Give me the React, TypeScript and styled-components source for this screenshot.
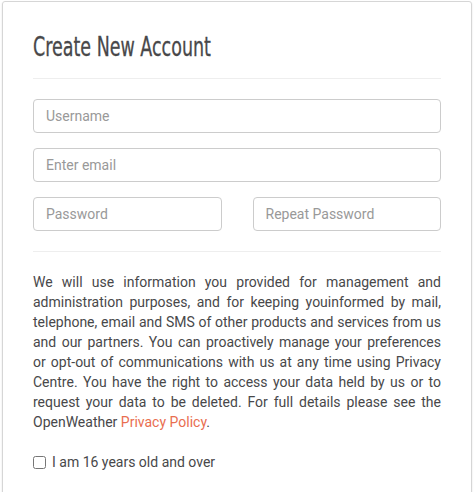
import styled, { createGlobalStyle } from 'styled-components'

const GlobalStyle = createGlobalStyle`
  html, body {
    margin: 0;
    padding: 0;
    background: #fff;
  }
  body {
    font-family: Roboto, "Noto Sans", Arial, sans-serif;
    color: #48484a;
  }
  * {
    box-sizing: border-box;
  }
`

function App() {
  return (
    <>
      <GlobalStyle />
      <_Page>
        <_Card>
          <_Title>Create New Account</_Title>
          <_Divider top={13} />
          <_Form>
            <_Input type="text" placeholder="Username" />
            <_Input type="email" placeholder="Enter email" />
            <_Row>
              <_Input type="password" placeholder="Password" />
              <_Input type="password" placeholder="Repeat Password" />
            </_Row>
          </_Form>
          <_Divider top={20} />
          <_Notice>
            We will use information you provided for management and
            administration purposes, and for keeping youinformed by mail,
            telephone, email and SMS of other products and services from us and
            our partners. You can proactively manage your preferences or opt-out
            of communications with us at any time using Privacy Centre. You have
            the right to access your data held by us or to request your data to
            be deleted. For full details please see the OpenWeather{' '}
            <_Link href="#">Privacy Policy</_Link>.
          </_Notice>
          <_CheckLabel>
            <_Checkbox type="checkbox" />
            I am 16 years old and over
          </_CheckLabel>
        </_Card>
      </_Page>
    </>
  )
}

const _Page = styled.div`
  padding: 1px 3px 0 2px;
  height: 492px;
  overflow: hidden;
`

const _Card = styled.div`
  width: 470px;
  min-height: 520px;
  border: 1px solid #d6d6d6;
  border-radius: 3px;
  box-shadow: 0 1px 2px rgba(0, 0, 0, 0.12);
  padding: 27px 30px 30px 30px;
`

// Oswald isn't available, so a condensed face squeezed a little more
const _Title = styled.h1`
  margin: 0;
  font-family: "DejaVu Sans Condensed", "DejaVu Sans", sans-serif;
  font-stretch: condensed;
  font-weight: 400;
  font-size: 27px;
  line-height: 36px;
  color: #48484a;
  -webkit-text-stroke: 0.3px #48484a;
  transform: scaleX(0.72);
  transform-origin: left center;
  white-space: nowrap;
`

const _Divider = styled.hr<{ top: number }>`
  margin: ${({ top }) => top}px 0 20px;
  border: 0;
  border-top: 1px solid #eeeeee;
`

const _Form = styled.div`
  display: flex;
  flex-direction: column;
  gap: 15px;
`

const _Row = styled.div`
  display: grid;
  grid-template-columns: 1fr 1fr;
  column-gap: 31px;
`

const _Input = styled.input`
  width: 100%;
  height: 34px;
  padding: 6px 12px;
  border: 1px solid #cccccc;
  border-radius: 4px;
  font-family: Roboto, "Noto Sans", Arial, sans-serif;
  font-size: 14px;
  color: #555;
  background: #fff;
  outline: none;
  &::placeholder {
    color: #999999;
  }
`

const _Notice = styled.p`
  margin: 0;
  font-size: 14px;
  line-height: 20px;
  text-align: justify;
  color: #48484a;
`

const _Link = styled.a`
  color: #e96e50;
  text-decoration: none;
`

const _CheckLabel = styled.label`
  display: flex;
  align-items: center;
  gap: 6px;
  margin-top: 22px;
  font-size: 14px;
  color: #48484a;
`

const _Checkbox = styled.input`
  margin: 0;
  width: 13px;
  height: 13px;
`

export default App
